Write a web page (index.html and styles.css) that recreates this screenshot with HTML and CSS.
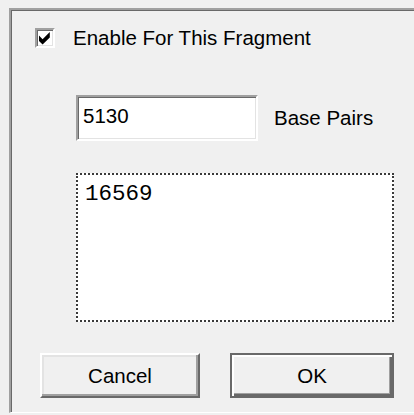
FILE: index.html
```html
<!DOCTYPE html>
<html lang="en">
<head>
<meta charset="utf-8">
<title>Fragment Length</title>
<link rel="stylesheet" href="styles.css">
</head>
<body>
<div class="dialog">
  <label class="check-row">
    <span class="checkbox">
      <svg viewBox="0 0 16 16" width="16" height="16" aria-hidden="true">
        <polygon points="2,5.6 5.6,9.2 12.8,2 12.8,7.4 5.6,14.6 2,11" fill="#000"/>
      </svg>
    </span>
    <span class="check-label">Enable For This Fragment</span>
  </label>

  <div class="length-row">
    <input class="field" type="text" value="5130">
    <span class="unit">Base Pairs</span>
  </div>

  <textarea class="sequence">16569</textarea>

  <div class="buttons">
    <button class="btn" type="button">Cancel</button>
    <button class="btn btn-default" type="button">OK</button>
  </div>
</div>
</body>
</html>
```

FILE: styles.css
```css
html, body {
  margin: 0;
  background: #f0f0f0;
}

body {
  font-family: "Liberation Sans", Arial, sans-serif;
  font-size: 20.5px;
  color: #000;
  overflow: hidden;
}

/* Sunken dialog panel: only its top and left edges fall inside the window */
.dialog {
  margin: 8px 0 0 9px;
  border-top: 2px solid #a0a0a0;
  border-left: 2px solid #a0a0a0;
  border-bottom: 1px solid #ffffff;
  box-shadow: inset 1px 1px 0 #696969;
  padding: 18px 0 14px 0;
  display: flex;
  flex-direction: column;
  align-items: flex-start;
}

/* Checkbox row */
.check-row {
  display: flex;
  align-items: center;
  gap: 18px;
  margin-left: 24px;
  height: 20px;
}

.checkbox {
  width: 20px;
  height: 20px;
  box-sizing: border-box;
  background: #fff;
  border: 2px solid;
  border-color: #a0a0a0 #ffffff #ffffff #a0a0a0;
  box-shadow: inset 1px 1px 0 #696969, inset -1px -1px 0 #e3e3e3;
  display: flex;
  align-items: center;
  justify-content: center;
}

.checkbox svg {
  display: block;
}

.check-label {
  line-height: 20px;
  white-space: nowrap;
}

/* Length field */
.length-row {
  display: flex;
  align-items: center;
  gap: 16px;
  margin: 47px 0 0 65px;
}

.field {
  width: 182px;
  height: 46px;
  box-sizing: border-box;
  margin: 0;
  padding: 0 0 5px 5px;
  border: 2px solid;
  border-color: #a0a0a0 #ffffff #ffffff #a0a0a0;
  box-shadow: inset 1px 1px 0 #696969, inset -1px -1px 0 #e3e3e3;
  background: #fff;
  font-family: "Liberation Sans", Arial, sans-serif;
  font-size: 20.5px;
  color: #000;
  outline: none;
}

.unit {
  white-space: nowrap;
}

/* Sequence box with focus dots */
.sequence {
  display: block;
  margin: 32px 0 0 65px;
  width: 318px;
  height: 149px;
  box-sizing: border-box;
  padding: 6px 7px;
  border: 2px dotted #3a3a3a;
  background: #fff;
  font-family: "Liberation Mono", "Courier New", monospace;
  font-size: 22.5px;
  line-height: 26px;
  color: #000;
  resize: none;
  outline: none;
}

/* Buttons */
.buttons {
  display: flex;
  gap: 30px;
  margin: 31px 0 0 29px;
}

.btn {
  width: 160px;
  height: 45px;
  box-sizing: border-box;
  margin: 0;
  padding: 0;
  background: #f0f0f0;
  border: 2px solid;
  border-color: #ffffff #696969 #696969 #ffffff;
  box-shadow: inset -2px -2px 0 #a0a0a0, inset 2px 2px 0 #e3e3e3;
  font-family: "Liberation Sans", Arial, sans-serif;
  font-size: 20.5px;
  color: #000;
}

.btn-default {
  width: 164px;
  border: 2px solid #696969;
  box-shadow: inset 2px 2px 0 #ffffff, inset -2px -2px 0 #696969, inset -3px -3px 0 #a0a0a0;
}
```
